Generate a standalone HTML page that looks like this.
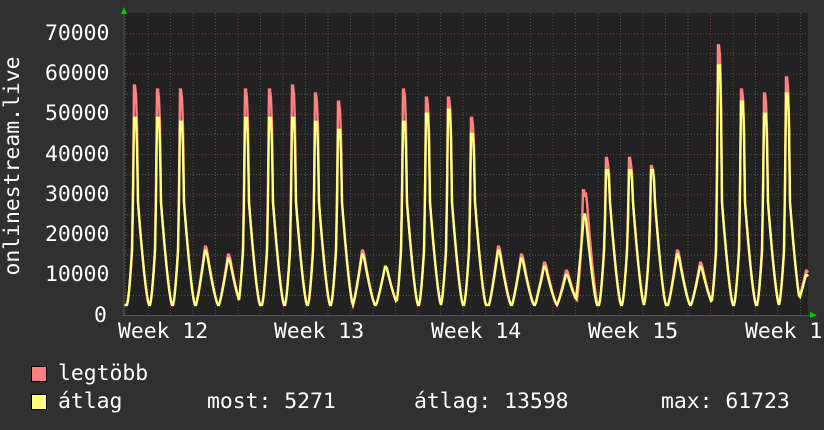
<!DOCTYPE html>
<html><head><meta charset="utf-8"><style>
html,body{margin:0;padding:0;background:#303030;}
body{width:824px;height:430px;overflow:hidden;position:relative;font-family:"DejaVu Sans Mono","Liberation Mono",monospace;color:#fff;}
.t{position:absolute;font-size:21.4px;line-height:20px;white-space:pre;}
.sq{position:absolute;width:14px;height:14px;border:1px solid #000;}
</style></head><body>
<svg id="g" width="824" height="430" style="position:absolute;left:0;top:0">
<rect x="124" y="13" width="684" height="302" fill="#222"/>
<g id="grid"></g>
<polyline id="pmax" fill="none" stroke="#ff8080" stroke-width="2.4"/>
<polyline id="pavg" fill="none" stroke="#ffff80" stroke-width="2.4"/>
<line x1="124" y1="10" x2="124" y2="316" stroke="#555" stroke-width="1"/>
<line x1="122" y1="315.5" x2="812" y2="315.5" stroke="#555" stroke-width="1"/>
<polygon points="121,14 127,14 124,7" fill="#00cc00"/>
<polygon points="810,312 810,318 817,315" fill="#00cc00"/>
</svg>
<div class="t" style="left:45px;top:24px">70000</div>
<div class="t" style="left:45px;top:64px">60000</div>
<div class="t" style="left:45px;top:104px">50000</div>
<div class="t" style="left:45px;top:145px">40000</div>
<div class="t" style="left:45px;top:185px">30000</div>
<div class="t" style="left:45px;top:225px">20000</div>
<div class="t" style="left:45px;top:265px">10000</div>
<div class="t" style="left:94px;top:306px">0</div>
<div class="t" style="left:13px;top:166px;transform:translate(-50%,-50%) rotate(-90deg)">onlinestream.live</div>
<div class="t" style="left:118px;top:322px">Week 12</div>
<div class="t" style="left:274px;top:322px">Week 13</div>
<div class="t" style="left:431px;top:322px">Week 14</div>
<div class="t" style="left:588px;top:322px">Week 15</div>
<div class="t" style="left:745px;top:322px">Week 1</div>
<div class="sq" style="left:31px;top:366px;background:#ff8080"></div>
<div class="sq" style="left:31px;top:394px;background:#ffff80"></div>
<div class="t" style="left:58px;top:364px">legtöbb</div>
<div class="t" style="left:58px;top:392px">átlag</div>
<div class="t" style="left:207px;top:392px">most: 5271</div>
<div class="t" style="left:414px;top:392px">átlag: 13598</div>
<div class="t" style="left:661px;top:392px">max: 61723</div>
<script>
var NS="http://www.w3.org/2000/svg",g=document.getElementById("grid");
function ln(x1,y1,x2,y2,c){var l=document.createElementNS(NS,"line");l.setAttribute("x1",x1);l.setAttribute("y1",y1);l.setAttribute("x2",x2);l.setAttribute("y2",y2);l.setAttribute("stroke",c);l.setAttribute("stroke-dasharray","1,2");g.appendChild(l);}
for(var v=5000;v<=70000;v+=5000){var y=315.5-v*0.004025;ln(124,y,808,y,v%10000==0?"#7a3a3a":"#555");}
for(var x=125.5;x<808;x+=22.5){var r=((x-238)%157.5+157.5)%157.5;var maj=r<2||r>155.5;ln(x,13,x,315,maj?"#7a3a3a":"#555");}
var pk=[[135,57,49],[158,56,49],[181,56,48],[205,17,16],[228,15,14],[246,56,49],[270,56,49],[293,57,49],[316,55,48],[339,53,46],[362,16,15],[385,12,12],[404,56,48],[427,54,50],[449,54,51],[472,49,45],[498,17,16],[521,15,14],[544,13,12],[566,11,10],[584,31,25],[607,39,36],[630,39,36],[652,37,36],[677,16,15],[700,13,12],[719,67,62],[742,56,53],[765,55,50],[787,59,55],[806,11,10]];
function val(x,k){var b=2.5,best=b;for(var i=0;i<pk.length;i++){var p=pk[i],P=p[k],d=x-p[0],v;
 if(P>30){ if(d<-8||d>14)continue;
   if(d<-3)v=b+(16-b)*Math.pow((d+8)/5,1.5);
   else if(d<-1)v=16+(P*0.85-16)*(d+3)/2;
   else if(d<1.5)v=P*(k==1?(d<0.5?1:0.96):1);
   else if(d<3)v=P-(P-28)*(d-1.5)/1.5;
   else v=b+(28-b)*Math.pow(1-(d-3)/11,1.4);}
 else { if(d<-9||d>13)continue;
   if(d<0)v=b+(P-b)*Math.pow(1-(-d/9),1.2);
   else if(d<1.5)v=P;
   else v=b+(P-b)*Math.pow(1-(d-1.5)/11.5,1.3);}
 if(v>best)best=v;}return best;}
function pts(k){var s="";for(var x=124;x<=808;x+=1){if(x>536&&x<541)continue;s+=x+","+(315-val(x,k)*1000*0.004025).toFixed(1)+" ";}return s;}
document.getElementById("pmax").setAttribute("points",pts(1));
document.getElementById("pavg").setAttribute("points",pts(2));
</script>
</body></html>
